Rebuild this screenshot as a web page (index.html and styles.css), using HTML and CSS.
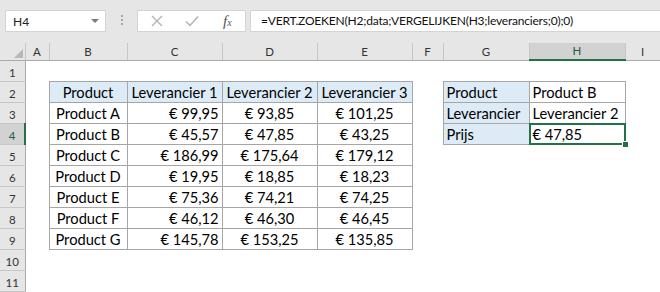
FILE: index.html
```html
<!DOCTYPE html>
<html lang="nl">

<head>
  <meta charset="UTF-8">
  <meta name="viewport" content="width=device-width, initial-scale=1.0">
  <title>VERT.ZOEKEN met VERGELIJKEN</title>
  <link rel="stylesheet" href="styles.css">
</head>

<body>
  <div class="formula-bar">
    <div class="name-box">
      <span>H4</span>
      <span class="drop"></span>
    </div>
    <div class="grip">
      <i></i><i></i><i></i>
    </div>
    <div class="fx-box">
      <svg class="ico" width="12" height="12" viewBox="0 0 12 12">
        <path d="M1 1 L11 11 M11 1 L1 11" stroke="#b3b3b3" stroke-width="1.4" fill="none" />
      </svg>
      <svg class="ico" width="14" height="12" viewBox="0 0 14 12">
        <path d="M1 6.5 L5 10.5 L13 1.5" stroke="#b3b3b3" stroke-width="1.5" fill="none" />
      </svg>
      <span class="fx">f<sub>x</sub></span>
    </div>
    <div class="formula">=VERT.ZOEKEN(H2;data;VERGELIJKEN(H3;leveranciers;0);0)</div>
  </div>

  <table class="sheet">
    <colgroup>
      <col class="w-hdr">
      <col class="w-a">
      <col class="w-b">
      <col class="w-c">
      <col class="w-d">
      <col class="w-e">
      <col class="w-f">
      <col class="w-g">
      <col class="w-h">
      <col class="w-i">
    </colgroup>
    <thead>
      <tr class="col-heads">
        <th class="corner">
          <svg width="9" height="9" viewBox="0 0 9 9">
            <polygon points="9,0 9,9 0,9" fill="#b8b8b8" />
          </svg>
        </th>
        <th>A</th>
        <th>B</th>
        <th>C</th>
        <th>D</th>
        <th>E</th>
        <th>F</th>
        <th>G</th>
        <th class="active">H</th>
        <th>I</th>
      </tr>
    </thead>
    <tbody>
      <tr>
        <th>1</th>
        <td></td><td></td><td></td><td></td><td></td><td></td><td></td><td></td><td></td>
      </tr>
      <tr>
        <th>2</th>
        <td></td>
        <td class="box head mid">Product</td>
        <td class="box head mid">Leverancier 1</td>
        <td class="box head mid">Leverancier 2</td>
        <td class="box head mid">Leverancier 3</td>
        <td></td>
        <td class="box head">Product</td>
        <td class="box">Product B</td>
        <td></td>
      </tr>
      <tr>
        <th>3</th>
        <td></td>
        <td class="box mid">Product A</td>
        <td class="box num">€ 99,95</td>
        <td class="box mid">€ 93,85</td>
        <td class="box mid">€ 101,25</td>
        <td></td>
        <td class="box head">Leverancier</td>
        <td class="box">Leverancier 2</td>
        <td></td>
      </tr>
      <tr>
        <th class="active">4</th>
        <td></td>
        <td class="box mid">Product B</td>
        <td class="box num">€ 45,57</td>
        <td class="box mid">€ 47,85</td>
        <td class="box mid">€ 43,25</td>
        <td></td>
        <td class="box head">Prijs</td>
        <td class="box sel">€ 47,85<span class="handle"></span></td>
        <td></td>
      </tr>
      <tr>
        <th>5</th>
        <td></td>
        <td class="box mid">Product C</td>
        <td class="box num">€ 186,99</td>
        <td class="box mid">€ 175,64</td>
        <td class="box mid">€ 179,12</td>
        <td></td><td></td><td></td><td></td>
      </tr>
      <tr>
        <th>6</th>
        <td></td>
        <td class="box mid">Product D</td>
        <td class="box num">€ 19,95</td>
        <td class="box mid">€ 18,85</td>
        <td class="box mid">€ 18,23</td>
        <td></td><td></td><td></td><td></td>
      </tr>
      <tr>
        <th>7</th>
        <td></td>
        <td class="box mid">Product E</td>
        <td class="box num">€ 75,36</td>
        <td class="box mid">€ 74,21</td>
        <td class="box mid">€ 74,25</td>
        <td></td><td></td><td></td><td></td>
      </tr>
      <tr>
        <th>8</th>
        <td></td>
        <td class="box mid">Product F</td>
        <td class="box num">€ 46,12</td>
        <td class="box mid">€ 46,30</td>
        <td class="box mid">€ 46,45</td>
        <td></td><td></td><td></td><td></td>
      </tr>
      <tr>
        <th>9</th>
        <td></td>
        <td class="box mid">Product G</td>
        <td class="box num">€ 145,78</td>
        <td class="box mid">€ 153,25</td>
        <td class="box mid">€ 135,85</td>
        <td></td><td></td><td></td><td></td>
      </tr>
      <tr>
        <th>10</th>
        <td></td><td></td><td></td><td></td><td></td><td></td><td></td><td></td><td></td>
      </tr>
      <tr>
        <th>11</th>
        <td></td><td></td><td></td><td></td><td></td><td></td><td></td><td></td><td></td>
      </tr>
    </tbody>
  </table>
</body>

</html>
```

FILE: styles.css
```css
body {
  margin: 0;
  padding: 0;
  width: 660px;
  height: 292px;
  overflow: hidden;
  background: #fff;
  font-family: 'Lato', 'Liberation Sans', sans-serif;
  color: #000;
}

/* formula bar */

.formula-bar {
  display: flex;
  align-items: flex-start;
  height: 43px;
  padding: 10px 0 0 5px;
  box-sizing: border-box;
  background: #e6e6e6;
}

.name-box,
.fx-box,
.formula {
  height: 22px;
  box-sizing: border-box;
  background: #fff;
  border: 1px solid #d4d4d4;
}

.name-box {
  width: 101px;
  display: flex;
  align-items: center;
  justify-content: space-between;
  padding: 0 6px 0 7px;
  font-size: 12px;
  color: #222;
}

.name-box .drop {
  width: 0;
  height: 0;
  border-left: 4px solid transparent;
  border-right: 4px solid transparent;
  border-top: 4px solid #7a7a7a;
}

.grip {
  width: 31px;
  display: flex;
  flex-direction: column;
  align-items: center;
  gap: 2px;
  padding-top: 5px;
}

.grip i {
  width: 2px;
  height: 2px;
  background: #a8a8a8;
}

.fx-box {
  width: 109px;
  display: flex;
  align-items: center;
  padding: 0 0 0 13px;
}

.fx-box .ico {
  margin-right: 22px;
}

.fx {
  font-family: 'Liberation Serif', serif;
  font-style: italic;
  font-size: 15px;
  color: #555;
  margin-left: 2px;
}

.fx sub {
  font-size: 10px;
  vertical-align: 0;
}

.formula {
  flex: 1;
  margin-left: 4px;
  border-right: none;
  padding: 0 0 0 10px;
  font-size: 12px;
  letter-spacing: -0.2px;
  line-height: 20px;
  color: #111;
  white-space: nowrap;
  overflow: hidden;
}

/* grid */

.sheet {
  table-layout: fixed;
  border-collapse: collapse;
  width: 660px;
  font-size: 14.67px;
}

.w-hdr { width: 25px; }
.w-a { width: 24px; }
.w-b { width: 78px; }
.w-c { width: 95px; }
.w-d { width: 95px; }
.w-e { width: 95px; }
.w-f { width: 31px; }
.w-g { width: 86px; }
.w-h { width: 96px; }
.w-i { width: 35px; }

.col-heads {
  height: 17px;
}

.col-heads th {
  padding: 0 0 2px;
  background: #e6e6e6;
  border-right: 1px solid #c6c6c6;
  border-bottom: 1px solid #ababab;
  font-weight: normal;
  font-size: 11.5px;
  line-height: 13px;
  color: #333;
  vertical-align: bottom;
}

.col-heads th.corner {
  text-align: right;
  vertical-align: bottom;
  padding: 0 2px 2px 0;
  line-height: 0;
}

.col-heads th.active {
  background: #d2d2d2;
  border-bottom: 2px solid #217346;
  color: #21603d;
}

tbody tr {
  height: 21px;
}

tbody th {
  padding: 0 0 2px;
  background: #e6e6e6;
  border-right: 1px solid #ababab;
  border-bottom: 1px solid #c6c6c6;
  font-weight: normal;
  font-size: 11.5px;
  line-height: 13px;
  color: #333;
  vertical-align: bottom;
}

tbody th.active {
  background: #d2d2d2;
  border-right: 2px solid #217346;
  color: #21603d;
}

tbody td {
  padding: 0 3px 1px;
  line-height: 17px;
  vertical-align: bottom;
  white-space: nowrap;
  overflow: visible;
}

td.box {
  border: 1px solid #a6a6a6;
}

td.head {
  background: #ddebf7;
}

td.mid {
  text-align: center;
}

td.num {
  text-align: right;
}

td.sel {
  position: relative;
}

td.sel::after {
  content: '';
  position: absolute;
  top: -1px;
  left: -1px;
  right: -1px;
  bottom: -1px;
  border: 2px solid #217346;
}

td.sel .handle {
  position: absolute;
  right: -4px;
  bottom: -4px;
  width: 5px;
  height: 5px;
  background: #217346;
  border: 1px solid #fff;
  z-index: 1;
}
```
